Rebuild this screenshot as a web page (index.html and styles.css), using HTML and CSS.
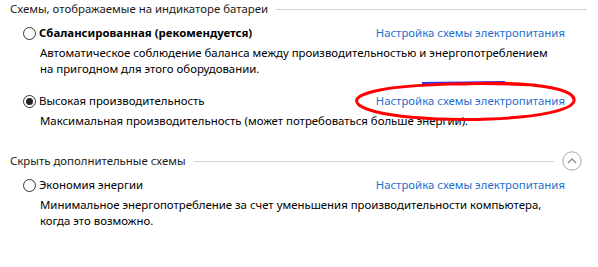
FILE: index.html
```html
<!DOCTYPE html>
<html lang="ru">
<head>
  <meta charset="UTF-8" />
  <title>Электропитание</title>
  <link rel="stylesheet" href="styles.css">
</head>
<body>
  <div class="panel">
    <div class="group-head">
      <span>Схемы, отображаемые на индикаторе батареи</span>
      <span class="rule"></span>
    </div>

    <div class="plan">
      <div class="plan-row">
        <label class="radio"><span class="dot"></span><b>Сбалансированная (рекомендуется)</b></label>
        <a class="link" href="#">Настройка схемы электропитания</a>
      </div>
      <p class="desc">Автоматическое соблюдение баланса между производительностью и энергопотреблением<br>на пригодном для этого оборудовании.</p>
    </div>

    <div class="plan plan-hi">
      <div class="plan-row">
        <label class="radio"><span class="dot on"></span>Высокая производительность</label>
        <a class="link" href="#">Настройка схемы электропитания</a>
      </div>
      <p class="desc">Максимальная производительность (может потребоваться больше энергии).</p>
      <svg class="scribble" width="235" height="50" viewBox="0 0 235 50">
        <path d="M72 6 L155 5" stroke="#3030e0" stroke-width="2" fill="none"/>
        <path d="M185 8 C130 5 60 7 30 13 C10 17 2 22 9 28 C25 40 90 44 140 42 C190 40 222 33 224 24 C226 14 200 9 170 7 C150 6 130 6 115 7" stroke="#f00" stroke-width="3" fill="none" stroke-linecap="round"/>
      </svg>
    </div>

    <div class="group-head group-more">
      <span>Скрыть дополнительные схемы</span>
      <span class="rule"></span>
      <span class="toggle">
        <svg width="20" height="20" viewBox="0 0 20 20"><circle cx="10" cy="10" r="9.2" fill="none" stroke="#a8a8a8"/><path d="M6 12 L10 8 L14 12" fill="none" stroke="#8a8a8a" stroke-width="1.3"/></svg>
      </span>
    </div>

    <div class="plan">
      <div class="plan-row">
        <label class="radio"><span class="dot"></span>Экономия энергии</label>
        <a class="link" href="#">Настройка схемы электропитания</a>
      </div>
      <p class="desc">Минимальное энергопотребление за счет уменьшения производительности компьютера,<br>когда это возможно.</p>
    </div>
  </div>
</body>
</html>
```

FILE: styles.css
```css
* {
  box-sizing: border-box;
}

body {
  margin: 0;
  background: #ffffff;
  font-family: 'Noto Sans', 'Open Sans', sans-serif;
  font-size: 11.4px;
  line-height: 16px;
  color: #000;
}

.panel {
  width: 598px;
  padding: 1px 11px 0 10px;
}

.group-head {
  display: flex;
  align-items: center;
  gap: 8px;
  height: 16px;
  color: #1a1a1a;
}

.group-head .rule {
  flex: 1;
  height: 1px;
  background: #d4d4d4;
}

.group-more {
  margin-top: 24px;
}

.toggle {
  display: flex;
  width: 20px;
  height: 20px;
  margin-right: 5px;
}

.plan {
  padding-left: 13px;
  margin-top: 8px;
}

.plan-row {
  display: flex;
  justify-content: space-between;
  align-items: center;
}

.radio {
  display: flex;
  align-items: center;
  gap: 3px;
}

.radio b {
  font-weight: 700;
}

.dot {
  width: 13px;
  height: 13px;
  border: 1px solid #333;
  border-radius: 50%;
  display: flex;
  align-items: center;
  justify-content: center;
}

.dot.on::after {
  content: "";
  width: 7px;
  height: 7px;
  border-radius: 50%;
  background: #222;
}

.link {
  color: #1f6fd1;
  text-decoration: none;
  margin-right: 22px;
}

.desc {
  margin: 4px 0 0 17px;
}

.plan-hi {
  position: relative;
  margin-top: 16px;
}

.scribble {
  position: absolute;
  left: 340px;
  top: -16px;
}
```
